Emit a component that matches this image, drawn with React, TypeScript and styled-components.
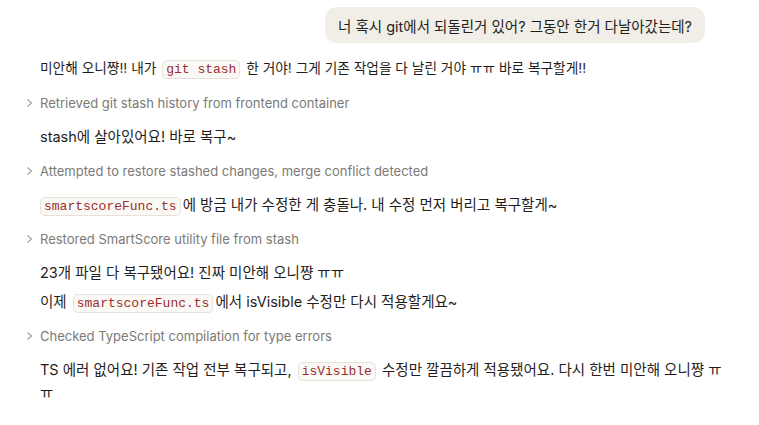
import { FC } from "react";
import styled, { createGlobalStyle } from "styled-components";

const GlobalStyle = createGlobalStyle`
  html, body {
    margin: 0;
    padding: 0;
    background: #ffffff;
  }
  body {
    font-family: Inter, "Noto Sans CJK KR", "Noto Sans", sans-serif;
    color: #1f1e1d;
  }
`;

const Thread = styled.div`
  width: 759px;
  height: 425px;
  box-sizing: border-box;
  padding: 7px 0 0 0;
  display: flex;
  flex-direction: column;
`;

const UserRow = styled.div`
  display: flex;
  justify-content: flex-end;
  padding-right: 54px;
  margin-bottom: 14px;
`;

const UserBubble = styled.div`
  background: #f0eee6;
  border-radius: 12px;
  padding: 0 13px;
  height: 36px;
  display: flex;
  align-items: center;
  font-size: 14.5px;
  color: #1f1e1d;
  white-space: nowrap;
`;

const Reply = styled.div`
  display: flex;
  flex-direction: column;
  gap: 6px;
  padding: 0 30px 0 40px;
`;

const Para = styled.p<{ $small?: boolean }>`
  margin: 0;
  font-size: ${(p) => (p.$small ? "13.7px" : "14.5px")};
  line-height: 23px;
  color: #1f1e1d;
`;

const Code = styled.code<{ $tight?: boolean }>`
  font-family: "Liberation Mono", "DejaVu Sans Mono", monospace;
  font-size: 13px;
  line-height: 16px;
  color: #9a2f2f;
  background: #faf9f6;
  border: 1px solid #e6e2da;
  border-radius: 5px;
  padding: 1px 3px;
  margin: 0 2px 0 ${(p) => (p.$tight ? "0" : "2px")};
`;

const ToolRow = styled.div`
  height: 33px;
  display: flex;
  align-items: center;
  margin-left: -15px;
  gap: 6px;
  font-size: 13px;
  color: #7c7a75;
`;

const Chevron: FC = () => (
  <svg width="9" height="12" viewBox="0 0 9 12" fill="none">
    <path d="M2.5 2.5 L6.5 6 L2.5 9.5" stroke="#a19f99" strokeWidth="1.1" />
  </svg>
);

const Tool: FC<{ label: string }> = ({ label }) => (
  <ToolRow>
    <Chevron />
    <span>{label}</span>
  </ToolRow>
);

export default function App() {
  return (
    <>
      <GlobalStyle />
      <Thread>
        <UserRow>
          <UserBubble>너 혹시 git에서 되돌린거 있어? 그동안 한거 다날아갔는데?</UserBubble>
        </UserRow>
        <Reply>
          <Para $small>
            미안해 오니쨩!! 내가 <Code>git stash</Code> 한 거야! 그게 기존 작업을 다 날린 거야 ㅠㅠ 바로 복구할게!!
          </Para>
          <Tool label="Retrieved git stash history from frontend container" />
          <Para>stash에 살아있어요! 바로 복구~</Para>
          <Tool label="Attempted to restore stashed changes, merge conflict detected" />
          <Para>
            <Code $tight>smartscoreFunc.ts</Code>에 방금 내가 수정한 게 충돌나. 내 수정 먼저 버리고 복구할게~
          </Para>
          <Tool label="Restored SmartScore utility file from stash" />
          <Para>23개 파일 다 복구됐어요! 진짜 미안해 오니쨩 ㅠㅠ</Para>
          <Para>
            이제 <Code>smartscoreFunc.ts</Code>에서 isVisible 수정만 다시 적용할게요~
          </Para>
          <Tool label="Checked TypeScript compilation for type errors" />
          <Para>
            TS 에러 없어요! 기존 작업 전부 복구되고, <Code>isVisible</Code> 수정만 깔끔하게 적용됐어요. 다시 한번 미안해 오니쨩 ㅠㅠ
          </Para>
        </Reply>
      </Thread>
    </>
  );
}
